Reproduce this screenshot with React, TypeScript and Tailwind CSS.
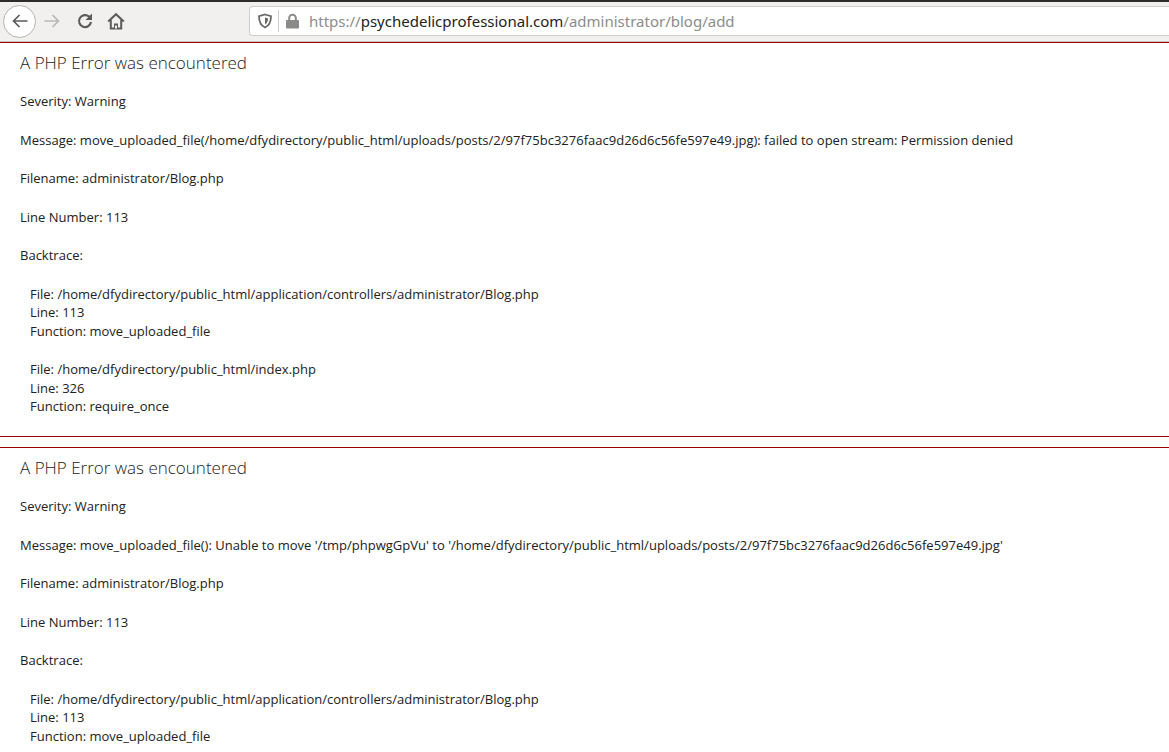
import React from "react";

const hash = "97f75bc3276faac9d26d6c56fe597e49.jpg";

function Trace({ file, line, fn }: { file: string; line: string; fn: string }) {
  return (
    <p className="mb-[20px] ml-[10px]">
      File: {file}
      <br />
      Line: {line}
      <br />
      Function: {fn}
    </p>
  );
}

function PhpError({ message, children }: { message: string; children: React.ReactNode }) {
  return (
    <div className="mb-[10px] border-y border-[#990000] pl-[20px]">
      <h4 className="mt-[8px] mb-[18px] text-[17px] leading-[23px] font-light text-[#222]">A PHP Error was encountered</h4>
      <p className="mb-[20px]">Severity: Warning</p>
      <p className="mb-[20px]">Message: {message}</p>
      <p className="mb-[20px]">Filename: administrator/Blog.php</p>
      <p className="mb-[20px]">Line Number: 113</p>
      <p className="mb-[20px]">Backtrace:</p>
      {children}
    </div>
  );
}

export default function App() {
  return (
    <div className="h-[752px] overflow-hidden bg-white font-['Open_Sans',sans-serif] text-[13.03px] leading-[18.55px] text-[#212121]">
      <div className="h-[2px] bg-[#2e2c2a]" />
      {/* Browser toolbar */}
      <div className="flex h-[40px] items-center border-b border-[#c8c6c3] bg-[#f1f0ee] pb-[1px] pl-[3px]">
        <div className="flex h-[33px] w-[33px] items-center justify-center rounded-full border border-[#b5b3b0] bg-white">
          <svg width="18" height="18" viewBox="0 0 18 18" fill="none" stroke="#5b5b5a" strokeWidth="1.7">
            <path d="M16.5 9H2M8.5 3L2.5 9l6 6" />
          </svg>
        </div>
        <svg className="ml-[7px]" width="18" height="18" viewBox="0 0 18 18" fill="none" stroke="#b9b8b6" strokeWidth="1.7">
          <path d="M1.5 9H16M9.5 3l6 6-6 6" />
        </svg>
        <svg className="ml-[15px]" width="18" height="18" viewBox="0 0 18 18" fill="none" stroke="#5b5b5a" strokeWidth="2.2">
          <path d="M15 10a6 6 0 1 1-2-5.5l2 1.5" />
          <path d="M16 1.5V8H9.5z" fill="#5b5b5a" stroke="none" />
        </svg>
        <svg className="ml-[13px]" width="18" height="18" viewBox="0 0 18 18" fill="none" stroke="#5b5b5a" strokeWidth="2">
          <path d="M1.2 9.5L9 2.2l7.8 7.3" />
          <path d="M3.8 8v8.5h10.4V8" />
          <path d="M7 16.5v-5h4v5" fill="#5b5b5a" stroke="none" />
          <path d="M8 16.5v-3h2v3" fill="#f1f0ee" stroke="none" />
        </svg>
        <div className="ml-[124px] flex h-[30px] flex-1 items-center rounded-l-[4px] border border-r-0 border-[#cfcdca] bg-white pl-[7px]">
          <svg width="16" height="16" viewBox="0 0 16 16" fill="none" stroke="#696968" strokeWidth="1.8">
            <path d="M8 1.5l6 1.7c0 5.300-1 9-6 11.300C3 12.200 2 8.500 2 3.200z" />
            <path d="M8 4.500l3 .8c0 3-.6 4.800-3 6.200z" fill="#696968" stroke="none" />
          </svg>
          <div className="ml-[5px] h-[22px] w-px bg-[#cfcdca]" />
          <svg className="ml-[6px]" width="15" height="16" viewBox="0 0 15 16" fill="none">
            <path d="M4.200 8V5a3.300 3.300 0 0 1 6.600 0v3" stroke="#8a8a89" strokeWidth="2" />
            <rect x="1" y="7" width="13" height="8.500" rx="1" fill="#8a8a89" />
          </svg>
          <span className="ml-[9px] text-[15px] leading-[20px] font-['Noto_Sans',sans-serif] text-[#8c8c8c]">
            https://<span className="text-[#222]">psychedelicprofessional.com</span>/administrator/blog/add
          </span>
        </div>
      </div>

      <PhpError message={`move_uploaded_file(/home/dfydirectory/public_html/uploads/posts/2/${hash}): failed to open stream: Permission denied`}>
        <Trace file="/home/dfydirectory/public_html/application/controllers/administrator/Blog.php" line="113" fn="move_uploaded_file" />
        <Trace file="/home/dfydirectory/public_html/index.php" line="326" fn="require_once" />
      </PhpError>
      <PhpError message={`move_uploaded_file(): Unable to move '/tmp/phpwgGpVu' to '/home/dfydirectory/public_html/uploads/posts/2/${hash}'`}>
        <Trace file="/home/dfydirectory/public_html/application/controllers/administrator/Blog.php" line="113" fn="move_uploaded_file" />
      </PhpError>
    </div>
  );
}
